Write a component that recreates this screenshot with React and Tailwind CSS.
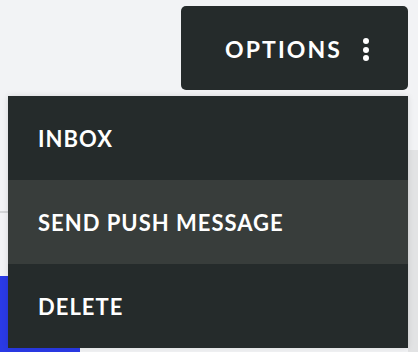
export default function App() {
  const items = ["INBOX", "SEND PUSH MESSAGE", "DELETE"];
  const active = 1;

  return (
    <div
      className="relative w-[418px] h-[352px] overflow-hidden bg-[#f2f3f5]"
      style={{ fontFamily: "Lato, 'Open Sans', sans-serif" }}
    >
      {/* page behind the menu */}
      <div className="absolute left-0 top-[211px] w-[12px] h-[2px] bg-[#d4d6d8]" />
      <div className="absolute -left-[40px] top-[276px] w-[120px] h-[120px] rounded-[10px] bg-[#2a3ae6]" />
      <div className="absolute left-[408px] top-[150px] w-[10px] h-[202px] bg-[#e2e3e4]" />

      <div className="relative flex flex-col">
        <button className="ml-auto mr-[10px] mt-[6px] flex h-[84px] w-[227px] items-center rounded-[5px] bg-[#252b2b] pl-[44px] pt-[3px] text-[23px] font-bold tracking-[2.1px] text-white">
          <span>OPTIONS</span>
          <span className="ml-[21px] flex flex-col gap-[2.5px]">
            <span className="block h-[6px] w-[6px] rounded-full bg-white" />
            <span className="block h-[6px] w-[6px] rounded-full bg-white" />
            <span className="block h-[6px] w-[6px] rounded-full bg-white" />
          </span>
        </button>

        <ul className="ml-[8px] mt-[6px] w-[400px] bg-[#252b2b] shadow-[0_0_6px_rgba(0,0,0,0.12)]">
          {items.map((item, i) => (
            <li
              key={item}
              className={
                "flex h-[84px] items-center pl-[30px] text-[22px] font-bold tracking-[1px] text-white " +
                (i === active ? "bg-[#383d3b]" : "")
              }
            >
              {item}
            </li>
          ))}
        </ul>
      </div>
    </div>
  );
}
